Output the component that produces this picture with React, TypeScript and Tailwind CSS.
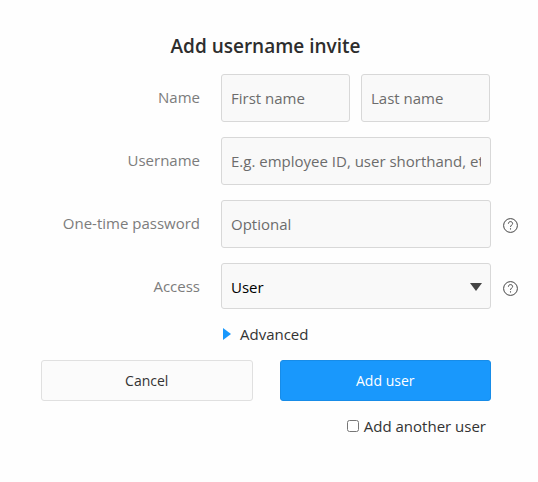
import { useState } from "react";
import type { FormEvent, ReactNode } from "react";

const INPUT =
  "block h-12 w-full min-w-0 rounded-[3px] border border-[#d8d8d8] bg-[#f9f9f9] px-[9px] text-[15px] text-black placeholder:text-[#6c6c6c] placeholder:opacity-100";

function HelpButton({ label }: { label: string }) {
  return (
    <button type="button" aria-label={label} className="h-[15px] w-[15px] text-[#444]">
      <svg className="h-[15px] w-[15px]" viewBox="0 0 15 15" fill="none" stroke="currentColor">
        <circle cx="7.5" cy="7.5" r="6.9" strokeWidth="1" />
        <path d="M5.4 5.7c0-1.3.9-2.1 2.1-2.1s2.1.8 2.1 1.9c0 1.6-2.1 1.7-2.1 3.4" strokeWidth="1" />
        <path d="M7.5 10.3v1.2" strokeWidth="1.1" />
      </svg>
    </button>
  );
}

function Row({ id, label, help, children }: { id: string; label: string; help?: string; children: ReactNode }) {
  return (
    <div className="flex items-start">
      <label htmlFor={id} className="mt-[13px] mr-[21px] w-[159px] shrink-0 text-right text-[#7c7c7c]">
        {label}
      </label>
      <div className="min-w-0 flex-1">{children}</div>
      <div className="mt-[18px] ml-3 flex w-[15px] shrink-0">{help && <HelpButton label={help} />}</div>
    </div>
  );
}

export default function App() {
  const [access, setAccess] = useState("User");
  const [another, setAnother] = useState(false);
  const [advanced, setAdvanced] = useState(false);

  const onSubmit = (e: FormEvent) => {
    e.preventDefault();
  };

  return (
    <div className="min-h-screen bg-[#fefefe] pt-8 pr-5 pb-10 pl-[41px] font-['Open_Sans',sans-serif] text-[15px] leading-5 text-[#333]">
      <form onSubmit={onSubmit}>
        <h1 className="mr-7 mb-3.5 text-center text-[19px] leading-7 font-semibold text-[#2d2d2d]">
          Add username invite
        </h1>

        <div className="flex flex-col gap-[15px]">
          <Row id="first-name" label="Name">
            <div className="flex gap-[11px] pr-px">
              <input id="first-name" className={INPUT} placeholder="First name" />
              <input aria-label="Last name" className={INPUT} placeholder="Last name" />
            </div>
          </Row>
          <Row id="username" label="Username">
            <input id="username" className={INPUT} placeholder="E.g. employee ID, user shorthand, etc." />
          </Row>
          <Row id="password" label="One-time password" help="About one-time passwords">
            <input id="password" className={INPUT} placeholder="Optional" />
          </Row>
          <Row id="access" label="Access" help="About access levels">
            <div className="relative">
              <select
                id="access"
                value={access}
                onChange={(e) => setAccess(e.target.value)}
                className="block h-[46px] w-full appearance-none rounded-[3px] border border-[#d8d8d8] bg-[#f9f9f9] px-[9px] pt-0.5 text-[15px] text-black"
              >
                <option>User</option>
                <option>Admin</option>
              </select>
              <svg
                className="pointer-events-none absolute top-5 right-[9px] h-2 w-3"
                viewBox="0 0 12 8"
                fill="#444"
              >
                <path d="M0 0h12L6 8z" />
              </svg>
            </div>
          </Row>
        </div>

        <div className="mr-[27px]">
          <button
            type="button"
            aria-expanded={advanced}
            onClick={() => setAdvanced(!advanced)}
            className="mt-[15px] ml-[182px] flex items-center gap-[9px]"
          >
            <svg className="h-3 w-2" viewBox="0 0 8 12" fill="#1998fc">
              <path d="M0 0l8 6-8 6z" />
            </svg>
            Advanced
          </button>

          <div className="mt-4 flex gap-[27px] text-sm">
            <button type="button" className="h-[41px] flex-1 rounded-[3px] border border-[#e0e0e0] bg-[#fbfbfb]">
              Cancel
            </button>
            <button
              type="submit"
              className="h-[41px] flex-1 rounded-[3px] border border-[#178ce8] bg-[#1998fc] text-white"
            >
              Add user
            </button>
          </div>

          <label className="mt-[15px] mr-[5px] flex items-center justify-end gap-[5px]">
            <input
              type="checkbox"
              checked={another}
              onChange={(e) => setAnother(e.target.checked)}
              className="h-3 w-3"
            />
            Add another user
          </label>
        </div>
      </form>
    </div>
  );
}
